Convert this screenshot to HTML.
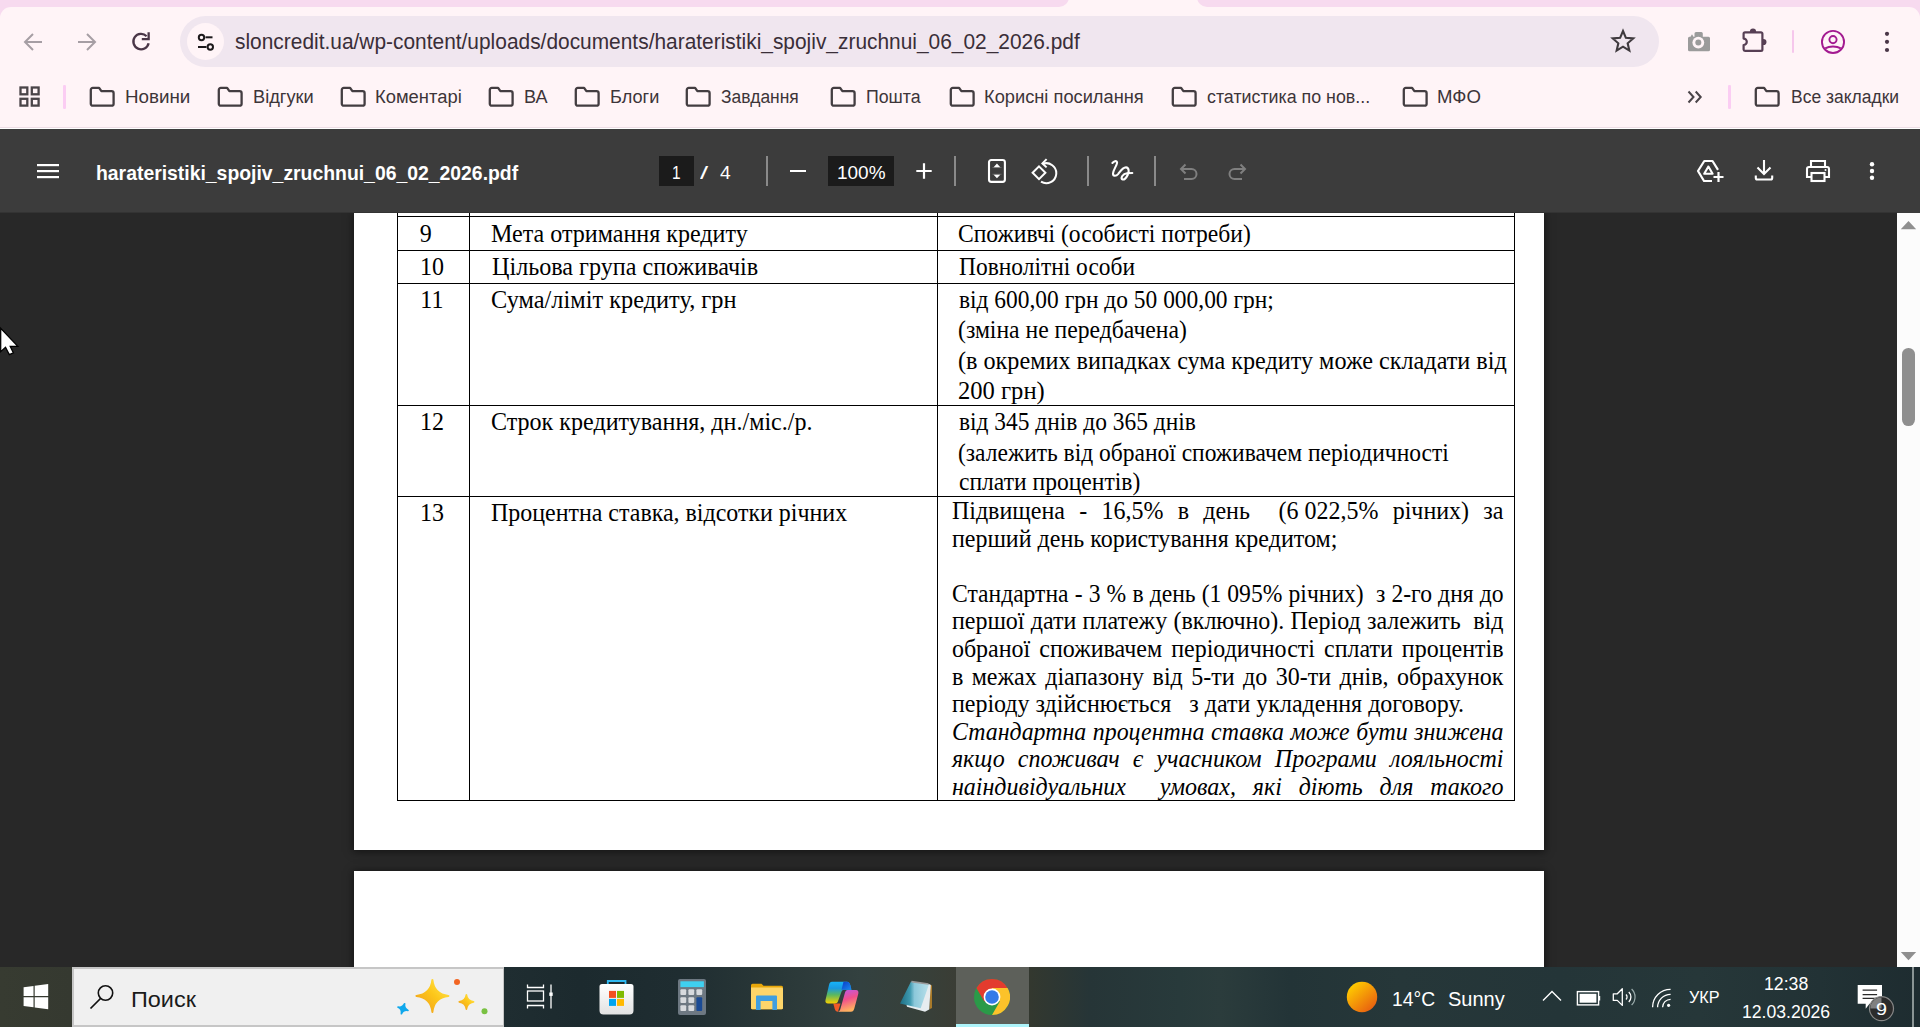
<!DOCTYPE html>
<html><head><meta charset="utf-8">
<style>
*{box-sizing:border-box}
html,body{margin:0;padding:0}
body{width:1920px;height:1027px;position:relative;overflow:hidden;background:#282828;font-family:"Liberation Sans",sans-serif}
.a{position:absolute}
.t{position:absolute;white-space:pre}
.j{position:absolute;white-space:pre-wrap;text-align:justify;text-align-last:justify;font-family:"Liberation Serif",serif;font-size:24px;line-height:30px;color:#000}
</style></head><body>
<div class="a" style="left:0;top:0;width:1920px;height:20px;background:#f7daef"></div>
<div class="a" style="left:1049px;top:0;width:168px;height:7px;background:#fff4f7"></div>
<div class="a" style="left:1039px;top:-10px;width:30px;height:17px;background:#f7daef;border-radius:0 0 10px 0"></div>
<div class="a" style="left:1197px;top:-10px;width:30px;height:17px;background:#f7daef;border-radius:0 0 0 10px"></div>
<div class="a" style="left:0;top:7px;width:1920px;height:121px;background:#fff4f7;border-radius:11px 11px 0 0"></div>
<div class="a" style="left:0;top:127px;width:1920px;height:1px;background:#eddde5"></div>
<div class="a" style="left:0;top:128px;width:1920px;height:1px;background:#ffffff"></div>
<svg class="a" style="left:22px;top:31px" width="22" height="22" viewBox="0 0 22 22"><path d="M20 11H3.5M11 3L3 11l8 8" fill="none" stroke="#a69ea4" stroke-width="2"/></svg>
<svg class="a" style="left:76px;top:31px" width="22" height="22" viewBox="0 0 22 22"><path d="M2 11h16.5M11 3l8 8-8 8" fill="none" stroke="#a69ea4" stroke-width="2"/></svg>
<svg class="a" style="left:130px;top:31px" width="22" height="22" viewBox="0 0 22 22"><path d="M18.6 12.2A7.7 7.7 0 1 1 16.6 5.2" fill="none" stroke="#4a3647" stroke-width="2.3"/><path d="M19.8 1.2V9.2H11.8V6.9h5.7V1.2z" fill="#4a3647"/></svg>
<div class="a" style="left:180px;top:16px;width:1479px;height:51px;background:#f0e6ef;border-radius:26px"></div>
<div class="a" style="left:187px;top:23px;width:37px;height:37px;background:#fff4f7;border-radius:50%"></div>
<svg class="a" style="left:195px;top:31px" width="22" height="22" viewBox="0 0 22 22"><g fill="none" stroke="#1d1a1c" stroke-width="2"><circle cx="6.5" cy="6.5" r="2.7"/><path d="M10.5 6.3h7"/><circle cx="15.3" cy="16" r="2.7"/><path d="M3 16h8.5"/></g></svg>
<div class="t" style="left:235.43px;top:27.90px;font-size:21px;line-height:27px;color:#3a2e38;font-family:'Liberation Sans',sans-serif;transform:scale(0.9953,1.070);transform-origin:0 21.00px;">sloncredit.ua/wp-content/uploads/documents/harateristiki_spojiv_zruchnui_06_02_2026.pdf</div>
<svg class="a" style="left:1603px;top:22px" width="40" height="38" viewBox="0 0 40 38"><path d="M20 9L22.88 15.84 30.27 16.46 24.66 21.31 26.35 28.54 20 24.7 13.65 28.54 15.34 21.31 9.73 16.46 17.12 15.84z" fill="none" stroke="#3f3a3e" stroke-width="2.1" stroke-linejoin="miter"/></svg>
<svg class="a" style="left:1680px;top:22px" width="40" height="38" viewBox="0 0 40 38"><path d="M9.5 14.8h1l1.5-2.6 1.5 2.6h1V11.5a1.5 1.5 0 0 1 1.5-1.5h5.3a1.5 1.5 0 0 1 1.5 1.5v3.3h5.7a1.5 1.5 0 0 1 1.5 1.5V27.8a1.5 1.5 0 0 1-1.5 1.5H9.5A1.5 1.5 0 0 1 8 27.8V16.3a1.5 1.5 0 0 1 1.5-1.5z" fill="#9b9b9b"/><circle cx="18.3" cy="20.6" r="5.9" fill="#fff4f7"/><circle cx="18.3" cy="20.6" r="3" fill="#9b9b9b"/></svg>
<svg class="a" style="left:1735px;top:22px" width="40" height="38" viewBox="0 0 40 38"><path d="M10 10.4H26a1.4 1.4 0 0 1 1.4 1.4V27.5a1.4 1.4 0 0 1-1.4 1.4H10a1.4 1.4 0 0 1-1.4-1.4V23a3.2 3.2 0 0 0 0-6.4V11.8a1.4 1.4 0 0 1 1.4-1.4z" fill="none" stroke="#573f54" stroke-width="2.2" stroke-linejoin="round"/><path d="M14.9 10.6V9.6a3.1 3.1 0 0 1 6.2 0v1z" fill="#573f54"/><path d="M27.4 16.9h1a3.1 3.1 0 0 1 0 6.2h-1z" fill="#573f54"/></svg>
<div class="a" style="left:1791.5px;top:30px;width:2px;height:23px;background:#f6c7ec;border-radius:1px"></div>
<svg class="a" style="left:1813px;top:22px" width="40" height="38" viewBox="0 0 40 38"><g fill="none" stroke="#a31a90" stroke-width="1.9"><circle cx="20" cy="19.95" r="11.05"/><circle cx="20" cy="17.6" r="3.6"/><path d="M12.2 26.4C14.5 25 17 24.5 20 24.5S25.5 25 27.8 26.4"/></g></svg>
<svg class="a" style="left:1880px;top:30px" width="14" height="24" viewBox="0 0 14 24"><g fill="#4a3647"><circle cx="7" cy="3.8" r="2.1"/><circle cx="7" cy="11.8" r="2.1"/><circle cx="7" cy="20" r="2.1"/></g></svg>
<svg class="a" style="left:19px;top:86px" width="22" height="22" viewBox="0 0 22 22"><g fill="none" stroke="#4a4448" stroke-width="2.3"><rect x="1.5" y="1.5" width="6.8" height="6.8"/><rect x="12.8" y="1.5" width="6.8" height="6.8"/><rect x="1.5" y="12.8" width="6.8" height="6.8"/><rect x="12.8" y="12.8" width="6.8" height="6.8"/></g></svg>
<div class="a" style="left:63.2px;top:85px;width:2.6px;height:23.8px;background:#fbcdf3;border-radius:1.3px"></div>
<svg class="a" style="left:88.9px;top:86px" width="26" height="22" viewBox="0 0 26 22"><path d="M1.8 3.9a2 2 0 0 1 2-2H10.1L12.4 5.2H22.6a2 2 0 0 1 2 2V17.7a2 2 0 0 1-2 2H3.8a2 2 0 0 1-2-2z" fill="none" stroke="#433d41" stroke-width="2.3" stroke-linejoin="round"/></svg>
<div class="t" style="left:125.35px;top:86.00px;font-size:18px;line-height:23px;color:#3d3539;font-family:'Liberation Sans',sans-serif;transform:scale(1.0435,1.000);transform-origin:0 17.50px;">Новини</div>
<svg class="a" style="left:216.5px;top:86px" width="26" height="22" viewBox="0 0 26 22"><path d="M1.8 3.9a2 2 0 0 1 2-2H10.1L12.4 5.2H22.6a2 2 0 0 1 2 2V17.7a2 2 0 0 1-2 2H3.8a2 2 0 0 1-2-2z" fill="none" stroke="#433d41" stroke-width="2.3" stroke-linejoin="round"/></svg>
<div class="t" style="left:253.00px;top:86.00px;font-size:18px;line-height:23px;color:#3d3539;font-family:'Liberation Sans',sans-serif;transform:scale(1.0125,1.000);transform-origin:0 17.50px;">Відгуки</div>
<svg class="a" style="left:340.0px;top:86px" width="26" height="22" viewBox="0 0 26 22"><path d="M1.8 3.9a2 2 0 0 1 2-2H10.1L12.4 5.2H22.6a2 2 0 0 1 2 2V17.7a2 2 0 0 1-2 2H3.8a2 2 0 0 1-2-2z" fill="none" stroke="#433d41" stroke-width="2.3" stroke-linejoin="round"/></svg>
<div class="t" style="left:375.48px;top:86.00px;font-size:18px;line-height:23px;color:#3d3539;font-family:'Liberation Sans',sans-serif;transform:scale(1.0217,1.000);transform-origin:0 17.50px;">Коментарі</div>
<svg class="a" style="left:487.5px;top:86px" width="26" height="22" viewBox="0 0 26 22"><path d="M1.8 3.9a2 2 0 0 1 2-2H10.1L12.4 5.2H22.6a2 2 0 0 1 2 2V17.7a2 2 0 0 1-2 2H3.8a2 2 0 0 1-2-2z" fill="none" stroke="#433d41" stroke-width="2.3" stroke-linejoin="round"/></svg>
<div class="t" style="left:523.51px;top:86.00px;font-size:18px;line-height:23px;color:#3d3539;font-family:'Liberation Sans',sans-serif;transform:scale(1.0039,1.000);transform-origin:0 17.50px;">ВА</div>
<svg class="a" style="left:573.5px;top:86px" width="26" height="22" viewBox="0 0 26 22"><path d="M1.8 3.9a2 2 0 0 1 2-2H10.1L12.4 5.2H22.6a2 2 0 0 1 2 2V17.7a2 2 0 0 1-2 2H3.8a2 2 0 0 1-2-2z" fill="none" stroke="#433d41" stroke-width="2.3" stroke-linejoin="round"/></svg>
<div class="t" style="left:609.51px;top:86.00px;font-size:18px;line-height:23px;color:#3d3539;font-family:'Liberation Sans',sans-serif;transform:scale(1.0062,1.000);transform-origin:0 17.50px;">Блоги</div>
<svg class="a" style="left:685.0px;top:86px" width="26" height="22" viewBox="0 0 26 22"><path d="M1.8 3.9a2 2 0 0 1 2-2H10.1L12.4 5.2H22.6a2 2 0 0 1 2 2V17.7a2 2 0 0 1-2 2H3.8a2 2 0 0 1-2-2z" fill="none" stroke="#433d41" stroke-width="2.3" stroke-linejoin="round"/></svg>
<div class="t" style="left:721.43px;top:86.00px;font-size:18px;line-height:23px;color:#3d3539;font-family:'Liberation Sans',sans-serif;transform:scale(0.9673,1.000);transform-origin:0 17.50px;">Завдання</div>
<svg class="a" style="left:830.0px;top:86px" width="26" height="22" viewBox="0 0 26 22"><path d="M1.8 3.9a2 2 0 0 1 2-2H10.1L12.4 5.2H22.6a2 2 0 0 1 2 2V17.7a2 2 0 0 1-2 2H3.8a2 2 0 0 1-2-2z" fill="none" stroke="#433d41" stroke-width="2.3" stroke-linejoin="round"/></svg>
<div class="t" style="left:866.08px;top:86.00px;font-size:18px;line-height:23px;color:#3d3539;font-family:'Liberation Sans',sans-serif;transform:scale(0.9853,1.000);transform-origin:0 17.50px;">Пошта</div>
<svg class="a" style="left:949.0px;top:86px" width="26" height="22" viewBox="0 0 26 22"><path d="M1.8 3.9a2 2 0 0 1 2-2H10.1L12.4 5.2H22.6a2 2 0 0 1 2 2V17.7a2 2 0 0 1-2 2H3.8a2 2 0 0 1-2-2z" fill="none" stroke="#433d41" stroke-width="2.3" stroke-linejoin="round"/></svg>
<div class="t" style="left:984.49px;top:86.00px;font-size:18px;line-height:23px;color:#3d3539;font-family:'Liberation Sans',sans-serif;transform:scale(1.0145,1.000);transform-origin:0 17.50px;">Корисні посилання</div>
<svg class="a" style="left:1170.5px;top:86px" width="26" height="22" viewBox="0 0 26 22"><path d="M1.8 3.9a2 2 0 0 1 2-2H10.1L12.4 5.2H22.6a2 2 0 0 1 2 2V17.7a2 2 0 0 1-2 2H3.8a2 2 0 0 1-2-2z" fill="none" stroke="#433d41" stroke-width="2.3" stroke-linejoin="round"/></svg>
<div class="t" style="left:1207.24px;top:86.00px;font-size:18px;line-height:23px;color:#3d3539;font-family:'Liberation Sans',sans-serif;transform:scale(0.9898,1.000);transform-origin:0 17.50px;">статистика по нов...</div>
<svg class="a" style="left:1401.5px;top:86px" width="26" height="22" viewBox="0 0 26 22"><path d="M1.8 3.9a2 2 0 0 1 2-2H10.1L12.4 5.2H22.6a2 2 0 0 1 2 2V17.7a2 2 0 0 1-2 2H3.8a2 2 0 0 1-2-2z" fill="none" stroke="#433d41" stroke-width="2.3" stroke-linejoin="round"/></svg>
<div class="t" style="left:1437.46px;top:86.00px;font-size:18px;line-height:23px;color:#3d3539;font-family:'Liberation Sans',sans-serif;transform:scale(1.0339,1.000);transform-origin:0 17.50px;">МФО</div>
<svg class="a" style="left:1754.1px;top:86px" width="26" height="22" viewBox="0 0 26 22"><path d="M1.8 3.9a2 2 0 0 1 2-2H10.1L12.4 5.2H22.6a2 2 0 0 1 2 2V17.7a2 2 0 0 1-2 2H3.8a2 2 0 0 1-2-2z" fill="none" stroke="#433d41" stroke-width="2.3" stroke-linejoin="round"/></svg>
<div class="t" style="left:1790.56px;top:86.00px;font-size:18px;line-height:23px;color:#3d3539;font-family:'Liberation Sans',sans-serif;transform:scale(0.9707,1.000);transform-origin:0 17.50px;">Все закладки</div>
<svg class="a" style="left:1687px;top:90px" width="16" height="14" viewBox="0 0 16 14"><path d="M1.5 1.5L6.5 7l-5 5.5M8.7 1.5L13.7 7l-5 5.5" fill="none" stroke="#4a4448" stroke-width="2"/></svg>
<div class="a" style="left:1728.2px;top:85px;width:2.6px;height:23.8px;background:#fbcdf3;border-radius:1.3px"></div>
<div class="a" style="left:354px;top:213px;width:1190px;height:637px;background:#fff;box-shadow:0 1px 8px 1px rgba(0,0,0,.5)"></div>
<div class="a" style="left:354px;top:871px;width:1190px;height:200px;background:#fff;box-shadow:0 1px 8px 1px rgba(0,0,0,.5)"></div>
<div class="a" style="left:397px;top:216px;width:1118px;height:1px;background:#000"></div>
<div class="a" style="left:397px;top:250px;width:1118px;height:1px;background:#000"></div>
<div class="a" style="left:397px;top:283px;width:1118px;height:1px;background:#000"></div>
<div class="a" style="left:397px;top:405px;width:1118px;height:1px;background:#000"></div>
<div class="a" style="left:397px;top:496px;width:1118px;height:1px;background:#000"></div>
<div class="a" style="left:397px;top:800px;width:1118px;height:1px;background:#000"></div>
<div class="a" style="left:397px;top:213px;width:1px;height:588px;background:#000"></div>
<div class="a" style="left:469px;top:213px;width:1px;height:588px;background:#000"></div>
<div class="a" style="left:937px;top:213px;width:1px;height:588px;background:#000"></div>
<div class="a" style="left:1514px;top:213px;width:1px;height:588px;background:#000"></div>
<div class="t" style="left:419.82px;top:218.70px;font-size:24px;line-height:31px;color:#000;font-family:'Liberation Serif',serif;transform:scale(1.0000,1.070);transform-origin:0 23.50px;">9</div>
<div class="t" style="left:420.10px;top:252.10px;font-size:24px;line-height:31px;color:#000;font-family:'Liberation Serif',serif;transform:scale(1.0000,1.070);transform-origin:0 23.50px;">10</div>
<div class="t" style="left:420.30px;top:284.90px;font-size:24px;line-height:31px;color:#000;font-family:'Liberation Serif',serif;transform:scale(1.0000,1.070);transform-origin:0 23.50px;">11</div>
<div class="t" style="left:420.10px;top:407.10px;font-size:24px;line-height:31px;color:#000;font-family:'Liberation Serif',serif;transform:scale(1.0000,1.070);transform-origin:0 23.50px;">12</div>
<div class="t" style="left:420.10px;top:498.10px;font-size:24px;line-height:31px;color:#000;font-family:'Liberation Serif',serif;transform:scale(1.0000,1.070);transform-origin:0 23.50px;">13</div>
<div class="t" style="left:490.84px;top:218.70px;font-size:24px;line-height:31px;color:#000;font-family:'Liberation Serif',serif;transform:scale(1.0025,1.070);transform-origin:0 23.50px;">Мета отримання кредиту</div>
<div class="t" style="left:491.64px;top:252.10px;font-size:24px;line-height:31px;color:#000;font-family:'Liberation Serif',serif;transform:scale(1.0056,1.070);transform-origin:0 23.50px;">Цільова група споживачів</div>
<div class="t" style="left:491.33px;top:284.90px;font-size:24px;line-height:31px;color:#000;font-family:'Liberation Serif',serif;transform:scale(1.0149,1.070);transform-origin:0 23.50px;">Сума/ліміт кредиту, грн</div>
<div class="t" style="left:490.94px;top:407.10px;font-size:24px;line-height:31px;color:#000;font-family:'Liberation Serif',serif;transform:scale(1.0028,1.070);transform-origin:0 23.50px;">Строк кредитування, дн./міс./р.</div>
<div class="t" style="left:491.24px;top:498.10px;font-size:24px;line-height:31px;color:#000;font-family:'Liberation Serif',serif;transform:scale(0.9976,1.070);transform-origin:0 23.50px;">Процентна ставка, відсотки річних</div>
<div class="t" style="left:958.46px;top:218.70px;font-size:24px;line-height:31px;color:#000;font-family:'Liberation Serif',serif;transform:scale(0.9825,1.070);transform-origin:0 23.50px;">Споживчі (особисті потреби)</div>
<div class="t" style="left:958.76px;top:252.10px;font-size:24px;line-height:31px;color:#000;font-family:'Liberation Serif',serif;transform:scale(0.9770,1.070);transform-origin:0 23.50px;">Повнолітні особи</div>
<div class="t" style="left:958.99px;top:284.90px;font-size:24px;line-height:31px;color:#000;font-family:'Liberation Serif',serif;transform:scale(0.9762,1.070);transform-origin:0 23.50px;">від 600,00 грн до 50 000,00 грн;</div>
<div class="t" style="left:958.39px;top:315.10px;font-size:24px;line-height:31px;color:#000;font-family:'Liberation Serif',serif;transform:scale(0.9859,1.070);transform-origin:0 23.50px;">(зміна не передбачена)</div>
<div class="t" style="left:958.37px;top:345.70px;font-size:24px;line-height:31px;color:#000;font-family:'Liberation Serif',serif;transform:scale(1.0075,1.070);transform-origin:0 23.50px;">(в окремих випадках сума кредиту може складати від</div>
<div class="t" style="left:958.36px;top:375.90px;font-size:24px;line-height:31px;color:#000;font-family:'Liberation Serif',serif;transform:scale(1.0240,1.070);transform-origin:0 23.50px;">200 грн)</div>
<div class="t" style="left:958.99px;top:406.50px;font-size:24px;line-height:31px;color:#000;font-family:'Liberation Serif',serif;transform:scale(0.9765,1.070);transform-origin:0 23.50px;">від 345 днів до 365 днів</div>
<div class="t" style="left:958.40px;top:437.50px;font-size:24px;line-height:31px;color:#000;font-family:'Liberation Serif',serif;transform:scale(0.9792,1.070);transform-origin:0 23.50px;">(залежить від обраної споживачем періодичності</div>
<div class="t" style="left:958.52px;top:466.70px;font-size:24px;line-height:31px;color:#000;font-family:'Liberation Serif',serif;transform:scale(0.9823,1.070);transform-origin:0 23.50px;">сплати процентів)</div>
<div class="j" style="left:951.9px;top:495.90px;width:551.6px;transform:scaleY(1.07);transform-origin:0 23px;">Підвищена - 16,5% в день  (<span style="display:inline-block">6&nbsp;022,5%</span> річних) за</div>
<div class="j" style="left:951.9px;top:523.52px;width:551.6px;transform:scaleY(1.07);transform-origin:0 23px;text-align:left;text-align-last:left;">перший день користування кредитом;</div>
<div class="j" style="left:951.9px;top:578.76px;width:560.90px;transform:scale(0.9834,1.07);transform-origin:0 23px;">Стандартна - 3 % в день (<span style="display:inline-block">1&nbsp;095%</span> річних)  з 2-го дня до</div>
<div class="j" style="left:951.9px;top:606.38px;width:551.6px;transform:scaleY(1.07);transform-origin:0 23px;">першої дати платежу (включно). Період залежить  від</div>
<div class="j" style="left:951.9px;top:634.00px;width:551.6px;transform:scaleY(1.07);transform-origin:0 23px;">обраної споживачем періодичності сплати процентів</div>
<div class="j" style="left:951.9px;top:661.62px;width:551.6px;transform:scaleY(1.07);transform-origin:0 23px;">в межах діапазону від 5-ти до 30-ти днів, обрахунок</div>
<div class="j" style="left:951.9px;top:689.24px;width:551.6px;transform:scaleY(1.07);transform-origin:0 23px;text-align:left;text-align-last:left;">періоду здійснюється   з дати укладення договору.</div>
<div class="j" style="left:951.9px;top:716.86px;width:554.62px;transform:scale(0.9945,1.07);transform-origin:0 23px;font-style:italic;">Стандартна процентна ставка може бути знижена</div>
<div class="j" style="left:951.9px;top:744.48px;width:551.6px;transform:scaleY(1.07);transform-origin:0 23px;font-style:italic;">якщо споживач є учасником Програми лояльності</div>
<div class="j" style="left:951.9px;top:772.10px;width:551.6px;transform:scaleY(1.07);transform-origin:0 23px;font-style:italic;">наіндивідуальних  умовах, які діють для такого</div>
<svg class="a" style="left:0;top:320px" width="20" height="40" viewBox="0 0 20 40"><path d="M0.7 8.4V31.6L5.5 27.2 9.3 34.6 13.4 32.9 10.2 26.3H17.8z" fill="#fff" stroke="#000" stroke-width="1.25" stroke-linejoin="miter"/></svg>
<div class="a" style="left:0;top:129px;width:1920px;height:84px;background:#3c3c3c"></div>
<div class="a" style="left:0;top:212px;width:1897px;height:1px;background:#333333"></div>
<svg class="a" style="left:36px;top:162px" width="24" height="18" viewBox="0 0 24 18"><g fill="#fff"><rect x="1" y="2" width="22" height="2.2"/><rect x="1" y="8" width="22" height="2.2"/><rect x="1" y="14" width="22" height="2.2"/></g></svg>
<div class="t" style="left:95.54px;top:158.70px;font-size:21px;line-height:27px;color:#ffffff;font-family:'Liberation Sans',sans-serif;font-weight:bold;transform:scale(0.9226,1.000);transform-origin:0 21.00px;">harateristiki_spojiv_zruchnui_06_02_2026.pdf</div>
<div class="a" style="left:659px;top:156px;width:35px;height:30px;background:#1b1b1b"></div>
<div class="t" style="left:671.84px;top:159.90px;font-size:19px;line-height:25px;color:#ffffff;font-family:'Liberation Sans',sans-serif;transform:scale(0.8153,1.000);transform-origin:0 19.00px;">1</div>
<div class="t" style="left:699.70px;top:159.90px;font-size:19px;line-height:25px;color:#ffffff;font-family:'Liberation Sans',sans-serif;transform:scale(1.5363,1.000);transform-origin:0 19.00px;">/</div>
<div class="t" style="left:719.57px;top:159.90px;font-size:19px;line-height:25px;color:#ffffff;font-family:'Liberation Sans',sans-serif;transform:scale(1.0109,1.000);transform-origin:0 19.00px;">4</div>
<div class="a" style="left:765.8px;top:156px;width:2px;height:30px;background:#8a8a8a"></div>
<div class="a" style="left:953.5px;top:156px;width:2px;height:30px;background:#8a8a8a"></div>
<div class="a" style="left:1087.1px;top:156px;width:2px;height:30px;background:#8a8a8a"></div>
<div class="a" style="left:1154.3px;top:156px;width:2px;height:30px;background:#8a8a8a"></div>
<div class="a" style="left:790px;top:170px;width:16px;height:2.2px;background:#fff"></div>
<div class="a" style="left:828px;top:156px;width:66px;height:30px;background:#1b1b1b"></div>
<div class="t" style="left:836.58px;top:159.90px;font-size:19px;line-height:25px;color:#ffffff;font-family:'Liberation Sans',sans-serif;transform:scale(0.9978,1.000);transform-origin:0 19.00px;">100%</div>
<svg class="a" style="left:914px;top:161px" width="20" height="20" viewBox="0 0 20 20"><path d="M10 2.3v15.4M2.3 10h15.4" stroke="#fff" stroke-width="2.2"/></svg>
<svg class="a" style="left:983px;top:155px" width="28" height="33" viewBox="0 0 28 33"><rect x="6" y="5" width="15.9" height="21.9" rx="2.3" fill="none" stroke="#fff" stroke-width="2.1"/><path d="M10.4 12.4L13.95 8.5l3.55 3.9zM10.4 19.6l3.55 3.6 3.55-3.6z" fill="#fff"/><path d="M9.3 12.6h9.4M9.3 19.2h9.4" stroke="#777" stroke-width="0.6"/></svg>
<svg class="a" style="left:1030px;top:157px" width="30" height="28" viewBox="0 0 30 28"><path d="M9 9.4l6.4 6.4L9 22.2 2.6 15.8z" fill="none" stroke="#fff" stroke-width="2"/><path d="M12.6 6.9A10 10 0 1 1 11 24.7" fill="none" stroke="#fff" stroke-width="2"/><path d="M16.6 2.1L12.4 6.4l4.2 4" fill="none" stroke="#fff" stroke-width="2"/></svg>
<svg class="a" style="left:1105px;top:155px" width="35" height="33" viewBox="0 0 35 33"><path d="M7.4 8C9 6.3 11.2 5.3 12 7 13 9 8.2 14.5 8 18.5 7.9 21.2 10.8 21.8 13.3 18.8 15.8 15.5 18 12.3 21 12.4 24 12.6 24.3 16.5 22.8 19.8 21.3 23 19 25.3 17.3 24.3 15.6 23.2 17.5 18.5 22 18.2L27.3 18" fill="none" stroke="#fff" stroke-width="2.1" stroke-linecap="round" stroke-linejoin="round"/></svg>
<svg class="a" style="left:1178px;top:162px" width="22" height="20" viewBox="0 0 22 20"><path d="M7.5 2.5L3 7l4.5 4.5M3 7h10.5a5 5 0 0 1 0 10H6" fill="none" stroke="#7f7f7f" stroke-width="2"/></svg>
<svg class="a" style="left:1226px;top:162px" width="22" height="20" viewBox="0 0 22 20"><path d="M14.5 2.5L19 7l-4.5 4.5M19 7H8.5a5 5 0 0 0 0 10H16" fill="none" stroke="#7f7f7f" stroke-width="2"/></svg>
<svg class="a" style="left:1695px;top:158px" width="32" height="26" viewBox="0 0 32 26"><path d="M17 23H9L3 13 9.3 3h8.2l5.5 8.8" fill="none" stroke="#fff" stroke-width="2.2" stroke-linejoin="round"/><path d="M13.4 8.5L9.2 15.8h8.4z" fill="none" stroke="#fff" stroke-width="2.1" stroke-linejoin="round"/><path d="M23.5 14v10M18.5 19h10" stroke="#fff" stroke-width="2.2"/></svg>
<svg class="a" style="left:1753px;top:158px" width="22" height="24" viewBox="0 0 22 24"><path d="M11 2v14M4.5 9.5L11 16l6.5-6.5" fill="none" stroke="#fff" stroke-width="2.1"/><path d="M2.8 17.5v2.5a1.5 1.5 0 0 0 1.5 1.5h13.4a1.5 1.5 0 0 0 1.5-1.5v-2.5" fill="none" stroke="#fff" stroke-width="2.1"/></svg>
<svg class="a" style="left:1804px;top:158px" width="28" height="26" viewBox="0 0 28 26"><path d="M7 9V3h14v6" fill="none" stroke="#fff" stroke-width="2.1"/><path d="M7 19H3v-8a2 2 0 0 1 2-2h18a2 2 0 0 1 2 2v8h-4" fill="none" stroke="#fff" stroke-width="2.1"/><rect x="7.5" y="15" width="13" height="8" fill="none" stroke="#fff" stroke-width="2.1"/><circle cx="21.5" cy="12" r="1" fill="#fff"/></svg>
<svg class="a" style="left:1866px;top:160px" width="12" height="22" viewBox="0 0 12 22"><g fill="#fff"><circle cx="6" cy="4.3" r="2.2"/><circle cx="6" cy="11" r="2.2"/><circle cx="6" cy="17.8" r="2.2"/></g></svg>
<div class="a" style="left:1897px;top:213px;width:23px;height:754px;background:#fcfcfc"></div>
<svg class="a" style="left:1897px;top:213px" width="23" height="754" viewBox="0 0 23 754"><path d="M3.8 16.2h15.4L11.5 8z" fill="#8f8f8f"/><path d="M3.8 739h15.4L11.5 747.2z" fill="#8f8f8f"/></svg>
<div class="a" style="left:1902px;top:348px;width:12.8px;height:77.5px;background:#8f8f8f;border-radius:6.4px"></div>
<div class="a" style="left:0;top:967px;width:1920px;height:60px;background:linear-gradient(90deg,#373b31 0px,#353930 72px,#1f2d31 504px,#1c2a2e 580px,#1f2d31 680px,#2a3838 780px,#334140 860px,#37403a 920px,#3a3d35 955px,#33382f 1030px,#263537 1090px,#283a3b 1180px,#2b3c3c 1220px,#233437 1290px,#263739 1400px,#243538 1560px,#263739 1700px,#223235 1820px,#1e2c30 1920px)"></div>
<svg class="a" style="left:23px;top:984px" width="26" height="26" viewBox="0 0 26 26"><g fill="#fff"><path d="M0.6 3.3L10.5 1.9V12H0.6z"/><path d="M11.7 1.7L25.2 0v12H11.7z"/><path d="M0.6 13.2h9.9v10.1L0.6 21.9z"/><path d="M11.7 13.2h13.5V25.2L11.7 23.4z"/></g></svg>
<div class="a" style="left:72px;top:967px;width:432px;height:60px;background:#f0f0f0;border:2px solid #c6c6c6;border-right-width:1px"></div>
<svg class="a" style="left:88px;top:983px" width="30" height="28" viewBox="0 0 30 28"><circle cx="17.5" cy="10" r="7.2" fill="none" stroke="#111" stroke-width="1.6"/><path d="M12.5 15.5L2.5 25.5" stroke="#111" stroke-width="1.7"/></svg>
<div class="t" style="left:131.43px;top:984.80px;font-size:22px;line-height:29px;color:#1a1a1a;font-family:'Liberation Sans',sans-serif;transform:scale(1.0643,1.000);transform-origin:0 22.00px;">Поиск</div>
<svg class="a" style="left:395px;top:975px" width="95" height="45" viewBox="0 0 95 45"><defs><linearGradient id="g1" x1="0.1" y1="0.9" x2="0.9" y2="0.1"><stop offset="0" stop-color="#f0a21e"/><stop offset="0.55" stop-color="#fdc71a"/><stop offset="1" stop-color="#ffe14a"/></linearGradient></defs><path d="M37.40 4.90C38.40 14.60 43.70 19.90 53.40 20.90C43.70 21.90 38.40 27.20 37.40 36.90C36.40 27.20 31.10 21.90 21.40 20.90C31.10 19.90 36.40 14.60 37.40 4.90z" fill="url(#g1)" stroke="url(#g1)" stroke-width="2" stroke-linejoin="round"/><path d="M71.40 19.70C71.90 24.00 74.30 26.40 78.60 26.90C74.30 27.40 71.90 29.80 71.40 34.10C70.90 29.80 68.50 27.40 64.20 26.90C68.50 26.40 70.90 24.00 71.40 19.70z" fill="url(#g1)" stroke="url(#g1)" stroke-width="1.6" stroke-linejoin="round"/><path d="M8.00 28.45C8.40 31.55 10.20 33.35 13.30 33.75C10.20 34.15 8.40 35.95 8.00 39.05C7.60 35.95 5.80 34.15 2.70 33.75C5.80 33.35 7.60 31.55 8.00 28.45z" fill="#10a8ec" stroke="#10a8ec" stroke-width="1.6" stroke-linejoin="round" transform="rotate(18 8 33.75)"/><circle cx="62" cy="6.9" r="3" fill="#f26522"/><circle cx="89.5" cy="36.2" r="3" fill="#79c142"/></svg>
<svg class="a" style="left:526px;top:983px" width="28" height="27" viewBox="0 0 28 27"><g fill="none" stroke="#fff" stroke-width="1.3"><path d="M1.5 1.5v3h16v-3"/><rect x="1.5" y="8" width="16" height="10"/><path d="M1.5 25.5v-3h16v3"/><path d="M25 1.5v24"/></g><rect x="23.3" y="9.5" width="3.4" height="3.4" fill="#fff"/></svg>
<svg class="a" style="left:598px;top:979px" width="38" height="37" viewBox="0 0 38 37"><defs><linearGradient id="sb" x1="0" y1="0" x2="0" y2="1"><stop offset="0" stop-color="#ffffff"/><stop offset="1" stop-color="#e2e2e2"/></linearGradient></defs><path d="M9.8 6.5V2h17.7v4.5" fill="none" stroke="#2fb8f0" stroke-width="1.8"/><path d="M1.5 7.4a2.5 2.5 0 0 1 2.5-2.5h29a2.5 2.5 0 0 1 2.5 2.5v24a4 4 0 0 1-4 4H5.5a4 4 0 0 1-4-4z" fill="url(#sb)"/><rect x="11" y="11.9" width="7" height="7" fill="#f25022"/><rect x="19" y="11.9" width="7" height="7" fill="#7fba00"/><rect x="11" y="19.9" width="7" height="7" fill="#00a4ef"/><rect x="19" y="19.9" width="7" height="7" fill="#ffb900"/></svg>
<svg class="a" style="left:677px;top:978px" width="30" height="38" viewBox="0 0 30 38"><rect x="1" y="1" width="28" height="36" rx="2" fill="#6d7882"/><rect x="3.4" y="3.3" width="23.5" height="5.8" fill="#3fd0f0"/><g fill="#d7dade"><rect x="3.4" y="11.3" width="5.8" height="5.8" rx="1"/><rect x="11.4" y="11.3" width="5.8" height="5.8" rx="1"/><rect x="19.4" y="11.3" width="5.8" height="5.8" rx="1"/><rect x="3.4" y="19.3" width="5.8" height="5.8" rx="1"/><rect x="11.4" y="19.3" width="5.8" height="5.8" rx="1"/><rect x="3.4" y="27.3" width="5.8" height="5.8" rx="1"/><rect x="11.4" y="27.3" width="5.8" height="5.8" rx="1"/></g><rect x="19.4" y="19.3" width="5.8" height="13.8" rx="1" fill="#1a4a94"/></svg>
<svg class="a" style="left:750px;top:983px" width="34" height="28" viewBox="0 0 34 28"><path d="M1 2.2a1.5 1.5 0 0 1 1.5-1.5h9l2 2h18a1.5 1.5 0 0 1 1.5 1.5v20.5a1.5 1.5 0 0 1-1.5 1.5H2.5A1.5 1.5 0 0 1 1 24.7z" fill="#e8a70a"/><path d="M1 4.5h30.5a1.5 1.5 0 0 1 1.5 1.5v18.7a1.5 1.5 0 0 1-1.5 1.5H2.5A1.5 1.5 0 0 1 1 24.7z" fill="#fdd56a"/><path d="M6 27V13.5a1 1 0 0 1 1-1h19a1 1 0 0 1 1 1V27h-4.6V18h-11.8v9z" fill="#3f9ee0"/></svg>
<svg class="a" style="left:818px;top:975px" width="50" height="45" viewBox="0 0 50 45"><defs><linearGradient id="cp1" x1="0" y1="0" x2="0" y2="1"><stop offset="0" stop-color="#16b4fa"/><stop offset=".3" stop-color="#1a9ae0"/><stop offset=".6" stop-color="#5ab860"/><stop offset="1" stop-color="#f8d000"/></linearGradient><linearGradient id="cp2" x1="0" y1="0" x2="0.3" y2="1"><stop offset="0" stop-color="#b45af0"/><stop offset=".5" stop-color="#f0508c"/><stop offset="1" stop-color="#ffb060"/></linearGradient><linearGradient id="cp3" x1="0" y1="0" x2="1" y2="1"><stop offset="0" stop-color="#0a3cc8"/><stop offset="1" stop-color="#1a8af0"/></linearGradient></defs><path d="M15.3 28.5H22.5L20 36.8C18.2 36.8 17.2 35.6 16.7 33.8z" fill="#f05a28"/><path d="M14 6.8H28.9C30.8 6.8 31.8 8.5 32.4 10.5L33.4 14.8H26C24.5 14.8 23.8 15.7 23.3 17.2L19.8 26.8C19.3 28 18.3 28.5 16.8 28.5H10C8 28.5 7 27 7.5 25L11 10C11.5 8 12.5 6.8 14 6.8z" fill="url(#cp1)"/><path d="M25.5 6.8H28.9C30.8 6.8 31.8 8.5 32.4 10.5L33.4 14.8H23.5z" fill="url(#cp3)"/><path d="M29.5 15.1H38C40 15.1 40.8 16.8 40.3 18.8L36.3 33.5C35.8 35.5 34.8 36.8 33 36.8H19.7C21 36.8 21.8 35.8 22.3 34.3L27 17.5C27.5 16 28.3 15.1 29.5 15.1z" fill="url(#cp2)"/></svg>
<svg class="a" style="left:890px;top:975px" width="50" height="45" viewBox="0 0 50 45"><defs><linearGradient id="np" x1="0" y1="0" x2="1" y2="0"><stop offset="0" stop-color="#1e6e84"/><stop offset=".35" stop-color="#3f9ab0"/><stop offset=".5" stop-color="#8cc8da"/><stop offset="1" stop-color="#b8e0ea"/></linearGradient></defs><path d="M40 9.5L42 10.5V33L39.5 34.2z" fill="#a87a2a"/><path d="M39 9L40.8 10 39.2 34.6 35 36.8 17 31.8 16.5 30z" fill="#e6ecef"/><path d="M21 6.6L39 9.2 30.7 33.3 10 28.5z" fill="url(#np)"/><path d="M21.5 6.6L38.5 9" stroke="#9a9a9a" stroke-width="1.6"/></svg>
<div class="a" style="left:956px;top:967px;width:73px;height:60px;background:#5d605a"></div>
<div class="a" style="left:956px;top:1023.8px;width:73px;height:3.2px;background:#aef4fa"></div>
<svg class="a" style="left:974px;top:979px" width="36" height="36" viewBox="0 0 36 36"><circle cx="18" cy="18" r="18" fill="#2a9a48"/><path d="M18 9L33.59 9A18 18 0 0 0 2.41 9L10.21 22.5 18 18z" fill="#e33b2e"/><path d="M33.59 9A18 18 0 0 1 18 36L25.79 22.5 18 18 18 9z" fill="#fcc22a"/><circle cx="18" cy="18" r="8.4" fill="#fff"/><circle cx="18" cy="18" r="6.8" fill="#357ae8"/></svg>
<svg class="a" style="left:1346px;top:981px" width="32" height="32" viewBox="0 0 32 32"><defs><linearGradient id="sun" x1="0.15" y1="0.1" x2="0.85" y2="0.9"><stop offset="0" stop-color="#ffcc00"/><stop offset="1" stop-color="#e86010"/></linearGradient></defs><circle cx="16" cy="16" r="15.2" fill="url(#sun)"/></svg>
<div class="t" style="left:1392.30px;top:984.90px;font-size:21px;line-height:27px;color:#ffffff;font-family:'Liberation Sans',sans-serif;transform:scale(0.9187,1.000);transform-origin:0 21.00px;">14°C</div>
<div class="t" style="left:1447.85px;top:984.90px;font-size:21px;line-height:27px;color:#ffffff;font-family:'Liberation Sans',sans-serif;transform:scale(0.9524,1.000);transform-origin:0 21.00px;">Sunny</div>
<svg class="a" style="left:1541px;top:989px" width="22" height="14" viewBox="0 0 22 14"><path d="M2 11.5L11 2.5l9 9" fill="none" stroke="#fff" stroke-width="1.4"/></svg>
<svg class="a" style="left:1575px;top:989px" width="28" height="18" viewBox="0 0 28 18"><rect x="2.4" y="2.6" width="21.2" height="13.3" fill="none" stroke="#fff" stroke-width="1.4"/><rect x="4.6" y="4.8" width="16.8" height="8.9" fill="#fff"/><rect x="23.6" y="7" width="1.6" height="4.5" fill="#fff"/></svg>
<svg class="a" style="left:1611px;top:986px" width="28" height="22" viewBox="0 0 28 22"><path d="M2.3 7.8h4l5-5v16.6l-5-5h-4z" fill="none" stroke="#fff" stroke-width="1.3" stroke-linejoin="round"/><path d="M15 8.5a3.5 3.5 0 0 1 0 5" fill="none" stroke="#fff" stroke-width="1.3"/><path d="M17.8 6a7 7 0 0 1 0 10" fill="none" stroke="#fff" stroke-width="1.3"/><path d="M20.6 3a11 11 0 0 1 0 16" fill="none" stroke="#9aa" stroke-width="1.2"/></svg>
<svg class="a" style="left:1650px;top:987px" width="24" height="22" viewBox="0 0 24 22"><g fill="none" stroke="#fff" stroke-width="1.3"><path d="M2.6 20.3A18 18 0 0 1 20.6 2.3"/><path d="M7.6 20.3A13 13 0 0 1 20.6 7.3"/><path d="M12.6 20.3A8 8 0 0 1 20.6 12.3"/></g><circle cx="18.6" cy="18.3" r="1.6" fill="#fff"/></svg>
<div class="t" style="left:1689.45px;top:987.15px;font-size:17px;line-height:22px;color:#ffffff;font-family:'Liberation Sans',sans-serif;transform:scale(0.9549,1.000);transform-origin:0 16.50px;">УКР</div>
<div class="t" style="left:1763.97px;top:973.00px;font-size:18px;line-height:23px;color:#ffffff;font-family:'Liberation Sans',sans-serif;transform:scale(0.9830,1.000);transform-origin:0 17.50px;">12:38</div>
<div class="t" style="left:1742.08px;top:1001.10px;font-size:18px;line-height:23px;color:#ffffff;font-family:'Liberation Sans',sans-serif;transform:scale(0.9776,1.000);transform-origin:0 17.50px;">12.03.2026</div>
<svg class="a" style="left:1855px;top:983px" width="42" height="40" viewBox="0 0 42 40"><path d="M2.7 2h24.3v18.8H14.5L10.7 25.8v-5H2.7z" fill="#fff"/><g stroke="#2a2a2a" stroke-width="1.3"><path d="M7.6 7.2h14.5M7.6 11.6h14.5M7.6 15.3h14.5"/></g><circle cx="26.5" cy="25.6" r="12" fill="#2b2b2b" stroke="#888" stroke-width="1.2"/><path d="M26.5 25.6V14.4A11.2 11.2 0 0 0 15.3 25.6z" fill="#808080"/></svg>
<div class="t" style="left:1875.91px;top:998.80px;font-size:17px;line-height:22px;color:#ffffff;font-family:'Liberation Sans',sans-serif;transform:scale(1.1638,1.000);transform-origin:0 16.50px;">9</div>
<div class="a" style="left:1912px;top:967px;width:1.5px;height:60px;background:#8a9494"></div>
</body></html>
